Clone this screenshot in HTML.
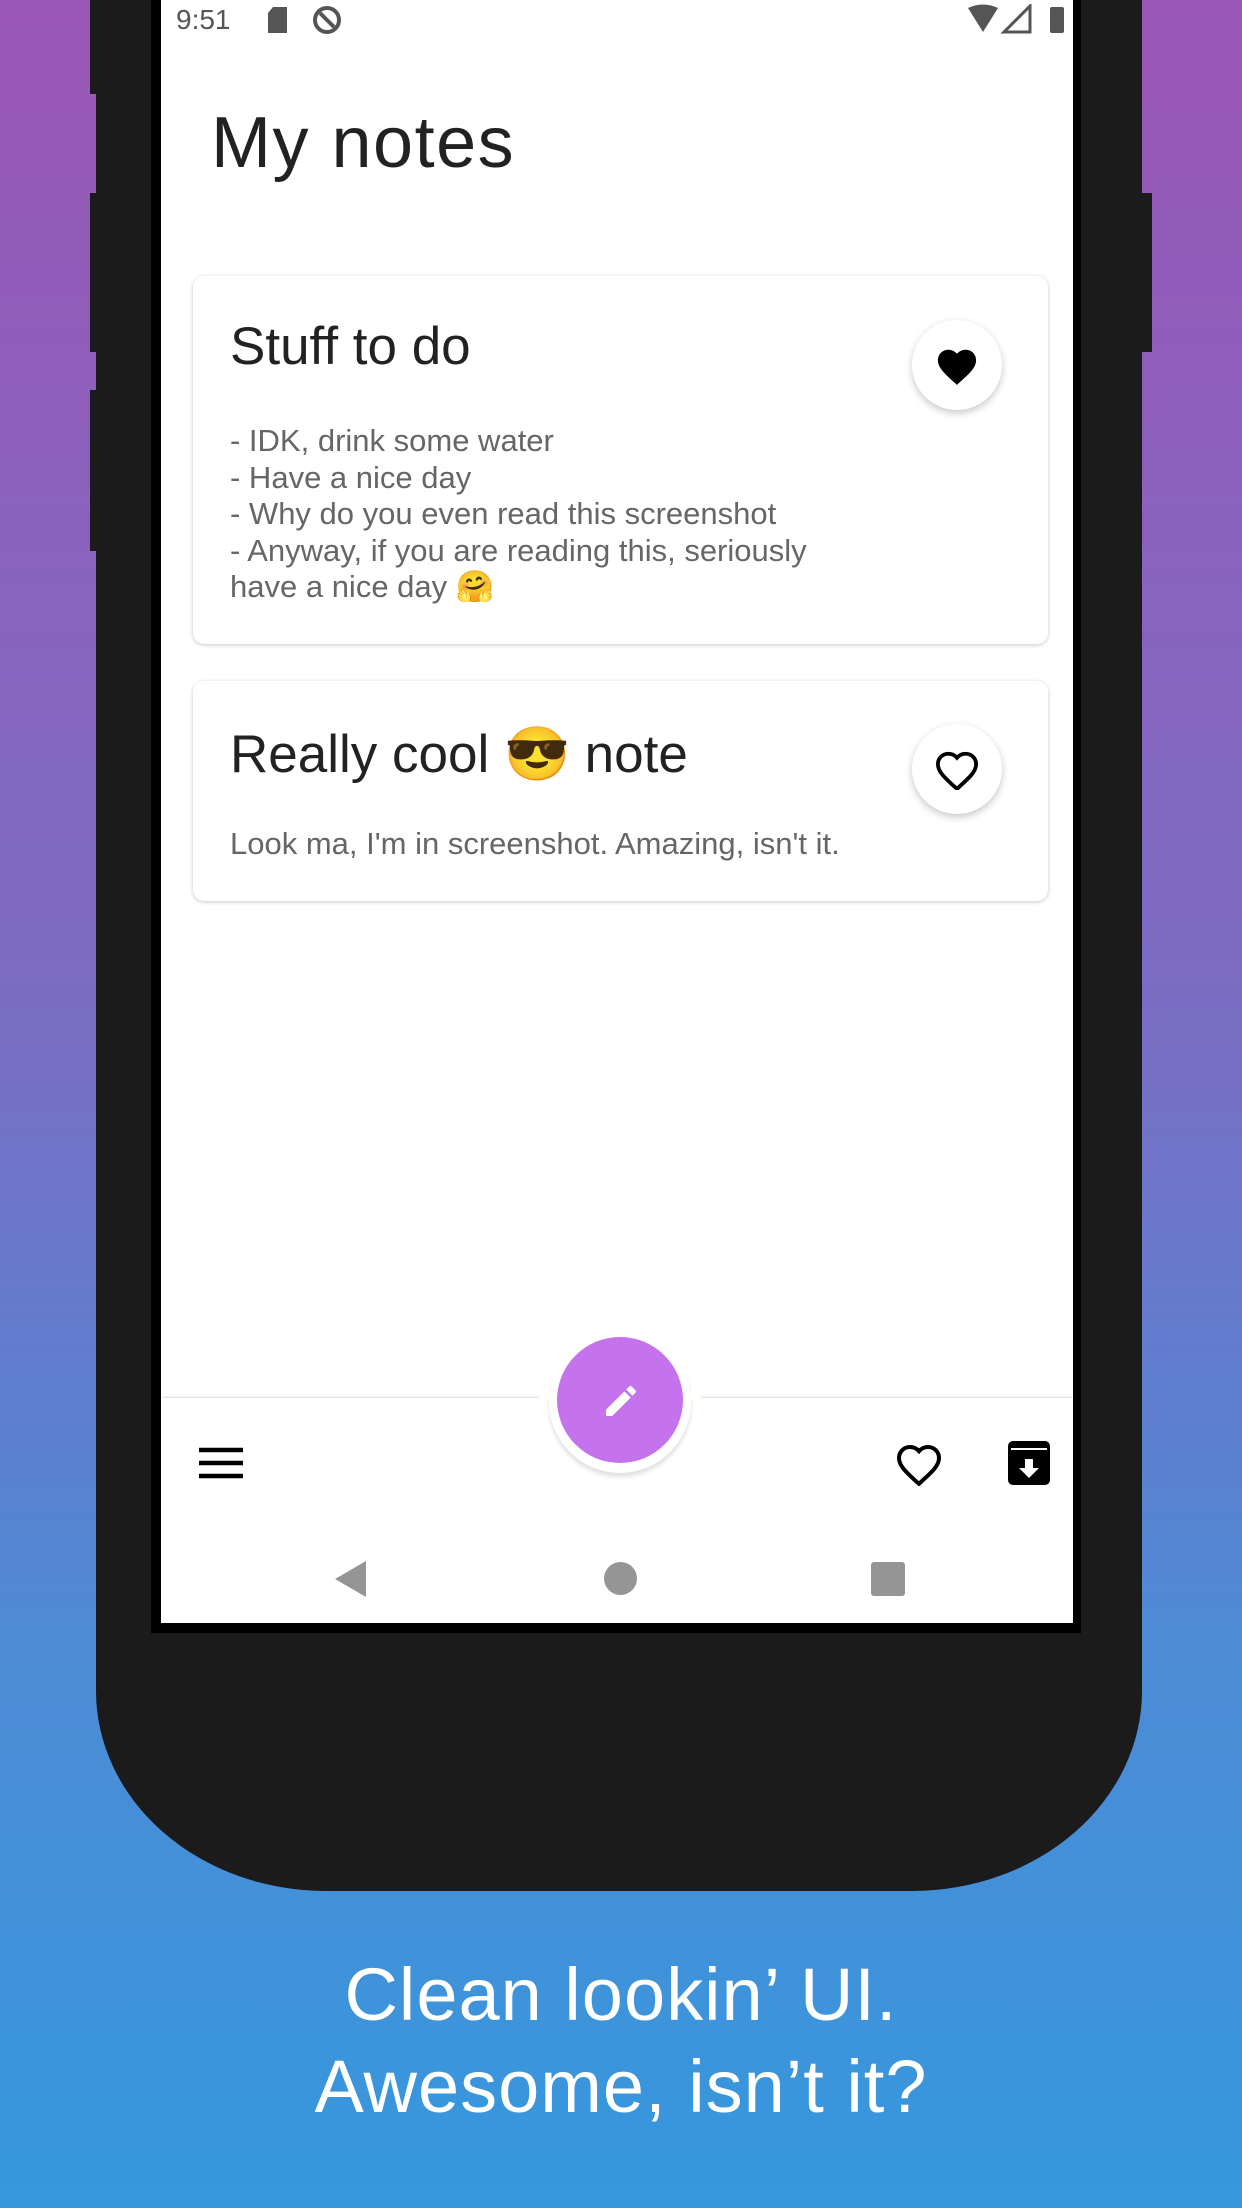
<!DOCTYPE html>
<html><head><meta charset="utf-8"><style>
*{margin:0;padding:0;box-sizing:border-box}
body{width:1242px;height:2208px;overflow:hidden;position:relative;background:linear-gradient(180deg,#9b57b6 0%,#7b6cc3 45%,#4d8bd6 75%,#3598dd 100%);font-family:"Liberation Sans","Noto Sans CJK SC",sans-serif}
.abs{position:absolute}
.phone{left:96px;top:-300px;width:1046px;height:2191px;background:#1b1b1b;border-radius:0 0 230px 230px/0 0 200px 200px}
.bump{background:#1b1b1b}
.frame{left:151px;top:0;width:930px;height:1633px;background:#000}
.screen{left:161px;top:0;width:912px;height:1623px;background:#fff;overflow:hidden}
.card{left:32px;width:855px;background:#fff;border-radius:11px;box-shadow:0 1px 4px rgba(0,0,0,.22)}
.t{color:#222;font-size:53px;position:absolute;left:37px}
.b{color:#666;font-size:31px;line-height:36.6px;position:absolute;left:37px}
.fav{position:absolute;left:719px;width:90px;height:90px;border-radius:50%;background:#fff;box-shadow:0 3px 8px rgba(0,0,0,.22);display:flex;align-items:center;justify-content:center}
.cap{left:0;width:1242px;text-align:center;color:#fff;font-size:74px;line-height:92px;font-weight:300;letter-spacing:1px}
</style></head><body>
<div class="abs phone"></div>
<div class="abs bump" style="left:90px;top:0;width:8px;height:94px"></div>
<div class="abs bump" style="left:90px;top:193px;width:8px;height:159px"></div>
<div class="abs bump" style="left:90px;top:390px;width:8px;height:161px"></div>
<div class="abs bump" style="left:1140px;top:193px;width:12px;height:159px"></div>
<div class="abs frame"></div>
<div class="abs screen">
  <div class="abs" style="left:15px;top:4px;font-size:28px;color:#555">9:51</div>
  <svg class="abs" style="left:104px;top:6px" width="26" height="28" viewBox="0 0 26 28"><path d="M8 1h14v26H3V7z" fill="#555"/></svg>
  <svg class="abs" style="left:150px;top:4px" width="32" height="32" viewBox="0 0 32 32"><circle cx="16" cy="16" r="12" fill="none" stroke="#555" stroke-width="4"/><path d="M9 9l14 14" stroke="#555" stroke-width="4"/></svg>
  <svg class="abs" style="left:805px;top:4px" width="100" height="30" viewBox="0 0 100 30"><path d="M2 4Q17-3 32 4L17 28z" fill="#555"/><path d="M64 2v26H38z" fill="none" stroke="#555" stroke-width="3"/><rect x="84" y="3" width="14" height="26" rx="2" fill="#555"/></svg>
  <div class="abs" style="left:50px;top:102px;font-size:72px;color:#222;letter-spacing:1.5px">My notes</div>
  <div class="abs card" style="top:276px;height:368px">
    <div class="t" style="top:40px">Stuff to do</div>
    <div class="fav" style="top:44px"><svg width="46" height="42" viewBox="0 0 24 22"><path d="M12 21.4l-1.5-1.3C5.4 15.4 2 12.3 2 8.5 2 5.4 4.4 3 7.5 3c1.7 0 3.4.8 4.5 2.1C13.1 3.8 14.8 3 16.5 3 19.6 3 22 5.4 22 8.5c0 3.8-3.4 6.9-8.5 11.5z"/></svg></div>
    <div class="b" style="top:147px">- IDK, drink some water<br>- Have a nice day<br>- Why do you even read this screenshot<br>- Anyway, if you are reading this, seriously<br>have a nice day 🤗</div>
  </div>
  <div class="abs card" style="top:681px;height:220px">
    <div class="t" style="top:42px">Really cool 😎 note</div>
    <div class="fav" style="top:43px"><svg width="46" height="42" viewBox="0 0 24 22"><path d="M12 21.4l-1.5-1.3C5.4 15.4 2 12.3 2 8.5 2 5.4 4.4 3 7.5 3c1.7 0 3.4.8 4.5 2.1C13.1 3.8 14.8 3 16.5 3 19.6 3 22 5.4 22 8.5c0 3.8-3.4 6.9-8.5 11.5z" fill="none" stroke="#000" stroke-width="2"/></svg></div>
    <div class="b" style="top:145px">Look ma, I'm in screenshot. Amazing, isn't it.</div>
  </div>
  <div class="abs" style="left:0;top:1398px;width:912px;height:225px;background:#fff;box-shadow:0 -1px 2px rgba(0,0,0,.15)"></div>
  <div class="abs" style="left:388px;top:1330px;width:142px;height:143px;border-radius:50%;background:#fff;box-shadow:0 4px 4px rgba(0,0,0,.12)"></div>
  <div class="abs" style="left:378px;top:1390px;width:162px;height:10px;background:#fff"></div>
  <div class="abs" style="left:396px;top:1337px;width:126px;height:126px;border-radius:50%;background:#c473ec"></div>
  <svg class="abs" style="left:440px;top:1381px" width="40" height="40" viewBox="0 0 24 24"><path d="M3 17.25V21h3.75L17.8 9.94l-3.75-3.75zM20.7 7.04a1 1 0 000-1.41l-2.34-2.34a1 1 0 00-1.41 0l-1.83 1.83 3.75 3.75z" fill="#fff"/></svg>
  <svg class="abs" style="left:38px;top:1447px" width="44" height="32" viewBox="0 0 44 32"><path d="M0 3h44M0 16h44M0 29h44" stroke="#000" stroke-width="4.5"/></svg>
  <svg class="abs" style="left:734px;top:1440px" width="48" height="46" viewBox="0 0 24 22"><path d="M12 21.4l-1.5-1.3C5.4 15.4 2 12.3 2 8.5 2 5.4 4.4 3 7.5 3c1.7 0 3.4.8 4.5 2.1C13.1 3.8 14.8 3 16.5 3 19.6 3 22 5.4 22 8.5c0 3.8-3.4 6.9-8.5 11.5z" fill="none" stroke="#000" stroke-width="2"/></svg>
  <svg class="abs" style="left:847px;top:1441px" width="42" height="44" viewBox="0 0 42 44"><rect x="0" y="0" width="42" height="44" rx="5" fill="#000"/><path d="M3 8h36" stroke="#fff" stroke-width="2"/><path d="M17 18h8v9h6L21 37 11 27h6z" fill="#fff"/></svg>
  <svg class="abs" style="left:172px;top:1560px" width="36" height="38" viewBox="0 0 36 38"><path d="M33 1v36L2 19z" fill="#959595"/></svg>
  <div class="abs" style="left:443px;top:1562px;width:33px;height:33px;border-radius:50%;background:#959595"></div>
  <div class="abs" style="left:710px;top:1562px;width:34px;height:34px;border-radius:3px;background:#959595"></div>
</div>
<div class="abs cap" style="top:1949px">Clean lookin’ UI.<br>Awesome, isn’t it?</div>
</body></html>
